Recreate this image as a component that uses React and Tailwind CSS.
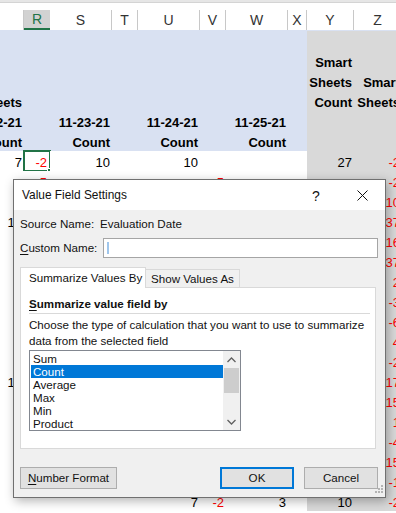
import React from 'react'

const letters = ['', 'R', 'S', 'T', 'U', 'V', 'W', 'X', 'Y', 'Z']

// header rows of the pivot (blue band)
const headRows = [
  {},
  { 8: 'Smart' },
  { 8: 'Sheets', 9: 'Smart' },
  { 0: 'eets', 8: 'Count', 9: 'Sheets' },
  { 0: '2-21', 2: '11-23-21', 4: '11-24-21', 6: '11-25-21' },
  { 0: 'Count', 2: 'Count', 4: 'Count', 6: 'Count' },
]

// array value = red number
const dataRows = [
  { 0: '7', 1: ['-2'], 2: '10', 4: '10', 8: '27', 9: ['-2'] },
  { 1: ['-5'], 5: ['-5'], 9: ['-2'] },
  { 9: ['10'] },
  { 0: '12', 9: ['37'] },
  { 9: ['16'] },
  { 9: ['37'] },
  { 9: ['2'] },
  { 9: ['-3'] },
  { 9: ['-6'] },
  { 9: ['4'] },
  { 9: ['-2'] },
  { 0: '15', 9: ['17'] },
  { 9: ['15'] },
  { 9: ['1'] },
  { 9: ['-4'] },
  { 9: ['15'] },
  { 9: ['-1'] },
  { 4: '7', 5: ['-2'], 6: '3', 8: '10', 9: ['-2'] },
]

const grid = 'grid grid-cols-[24px_26px_62px_26px_62px_26px_62px_19px_47px_48px]'

const Sheet = () => (
  <div className="w-[402px] font-['Liberation_Sans',Arial,sans-serif] text-[13px] leading-[15px] text-black">
    <div className="h-[3px] bg-[#e6e6e6] border-b border-[#d4d4d4]" />
    <div className="h-[7px] bg-white" />
    {/* column letters */}
    <div className={`${grid} h-[20px]`}>
      {letters.map((l, i) => (
        <div
          key={i}
          className={
            i === 1
              ? 'flex items-center justify-center bg-[#d2d2d2] border-b-2 border-[#217346] text-[#217346] text-[14px]'
              : 'flex items-center justify-center bg-white border-r border-[#c8c8c8] text-[#333] text-[14px]'
          }
        >
          {l}
        </div>
      ))}
    </div>
    {/* pivot header band */}
    <div className="pt-px bg-[#d9e1f2]">
      {headRows.map((row, r) => (
        <div key={r} className={`${grid} h-[20px]`}>
          {letters.map((_, i) => (
            <div
              key={i}
              className={`flex items-end justify-end pb-px overflow-hidden whitespace-nowrap font-bold pr-[2px] ${i > 7 ? 'bg-[#d9d9d9]' : 'bg-[#d9e1f2]'}`}
            >
              {row[i]}
            </div>
          ))}
        </div>
      ))}
    </div>
    {/* data rows */}
    {dataRows.map((row, r) => (
      <div key={r} className={`${grid} h-[20px]`}>
        {letters.map((_, i) => {
          const v = row[i]
          const isRed = Array.isArray(v)
          return (
            <div
              key={i}
              className={`relative flex items-end justify-end pb-px whitespace-nowrap pr-[2px] ${i > 7 ? 'bg-[#d9d9d9]' : 'bg-white'} ${isRed ? 'text-[#ff0000]' : ''}`}
            >
              <span className={i === 1 ? 'pr-[1px]' : ''}>{isRed ? v[0] : v}</span>
              {r === 0 && i === 1 && (
                <>
                  <div className="absolute -left-px -top-px -right-px -bottom-px border-2 border-[#217346]" />
                  <div className="absolute -right-[3px] -bottom-[3px] w-[6px] h-[6px] bg-[#217346] border border-white" />
                </>
              )}
            </div>
          )
        })}
      </div>
    ))}
  </div>
)

const ResizeGrip = () => (
  <svg width="12" height="12" viewBox="0 0 12 12" className="absolute right-px bottom-px">
    <g fill="#b4b4b4">
      <rect x="9" y="1" width="2" height="2" />
      <rect x="6" y="4" width="2" height="2" />
      <rect x="9" y="4" width="2" height="2" />
      <rect x="3" y="7" width="2" height="2" />
      <rect x="6" y="7" width="2" height="2" />
      <rect x="9" y="7" width="2" height="2" />
    </g>
  </svg>
)

const Dialog = () => (
  <div className="absolute left-[13px] top-[179px] w-[373px] h-[319px] border border-[#707070] bg-[#f0f0f0] shadow-[2px_3px_10px_rgba(0,0,0,0.3)] flex flex-col font-['Liberation_Sans',Arial,sans-serif] text-[11.6px] text-[#111] leading-[16px]">
    {/* title bar */}
    <div className="h-[30px] bg-white flex items-center pl-[8px] shrink-0">
      <span className="text-[11.9px]">Value Field Settings</span>
      <div className="ml-auto flex h-full">
        <div className="w-[46px] flex items-center justify-center text-[14px] pt-px">?</div>
        <div className="w-[46px] flex items-center justify-center">
          <svg width="11" height="11" viewBox="0 0 11 11">
            <path d="M0.5 0.5 L10.5 10.5 M10.5 0.5 L0.5 10.5" stroke="#111" strokeWidth="1" />
          </svg>
        </div>
      </div>
    </div>

    <div className="flex-1 pl-[6px] pr-[7px] relative">
      <div className="mt-[6px] h-[16px] flex items-center">
        <span className="w-[80px]">Source Name:</span>
        <span>Evaluation Date</span>
      </div>
      <div className="mt-[6px] flex items-center h-[20px]">
        <span className="w-[83px]">
          <span className="underline underline-offset-2">C</span>ustom Name:
        </span>
        <div className="w-[275px] h-[20px] border border-[#a5a5a5] bg-white flex items-center pl-[3px]">
          <div className="w-[2px] h-[12px] bg-[#9fc6ec]" />
        </div>
      </div>

      {/* tabs */}
      <div className="mt-[9px] flex items-end relative z-10 -mb-px">
        <div className="w-[126px] h-[21px] bg-white border-l border-t border-r border-[#d9d9d9] flex items-center pl-[8px]">
          Summarize Values By
        </div>
        <div className="w-[94px] h-[19px] bg-[#f0f0f0] border-t border-r border-b border-[#d9d9d9] flex items-center pl-[5px]">
          Show Values As
        </div>
      </div>
      <div className="w-[356px] h-[162px] bg-white border border-[#d9d9d9] px-[8px]">
        <div className="mt-[8px] font-bold">
          <span className="underline underline-offset-2">S</span>ummarize value field by
        </div>
        <div className="mt-px w-[341px] h-px bg-[#d9d9d9]" />
        <div className="mt-[3px] whitespace-nowrap">Choose the type of calculation that you want to use to summarize</div>
        <div>data from the selected field</div>
        <div className="mt-px w-[212px] h-[81px] border border-[#828790] flex">
          <div className="flex-1 pt-px pl-px leading-[13px]">
            {['Sum', 'Count', 'Average', 'Max', 'Min', 'Product'].map((it) => (
              <div
                key={it}
                className={`h-[13px] pl-[2px] ${it === 'Count' ? 'bg-[#0078d7] text-white' : ''}`}
              >
                {it}
              </div>
            ))}
          </div>
          <div className="w-[17px] bg-[#f0f0f0] flex flex-col items-center">
            <div className="h-[17px] flex items-center justify-center">
              <svg width="9" height="6" viewBox="0 0 9 6">
                <path d="M0.5 5 L4.5 1 L8.5 5" fill="none" stroke="#606060" strokeWidth="1.3" />
              </svg>
            </div>
            <div className="w-[15px] h-[25px] bg-[#cdcdcd]" />
            <div className="mt-auto h-[17px] flex items-center justify-center">
              <svg width="9" height="6" viewBox="0 0 9 6">
                <path d="M0.5 1 L4.5 5 L8.5 1" fill="none" stroke="#606060" strokeWidth="1.3" />
              </svg>
            </div>
          </div>
        </div>
      </div>

      {/* buttons */}
      <div className="mt-[18px] flex items-center">
        <div className="w-[97px] h-[22px] bg-[#e1e1e1] border border-[#adadad] flex items-center justify-center">
          <span>
            <span className="underline underline-offset-2">N</span>umber Format
          </span>
        </div>
        <div className="ml-auto w-[74px] h-[22px] bg-[#e1e1e1] border-2 border-[#0078d7] flex items-center justify-center">
          OK
        </div>
        <div className="ml-[10px] w-[74px] h-[22px] bg-[#e1e1e1] border border-[#adadad] flex items-center justify-center">
          Cancel
        </div>
      </div>
      <ResizeGrip />
    </div>
  </div>
)

export default function App() {
  return (
    <div className="relative w-[396px] h-[513px] overflow-hidden bg-white">
      <Sheet />
      <Dialog />
    </div>
  )
}
